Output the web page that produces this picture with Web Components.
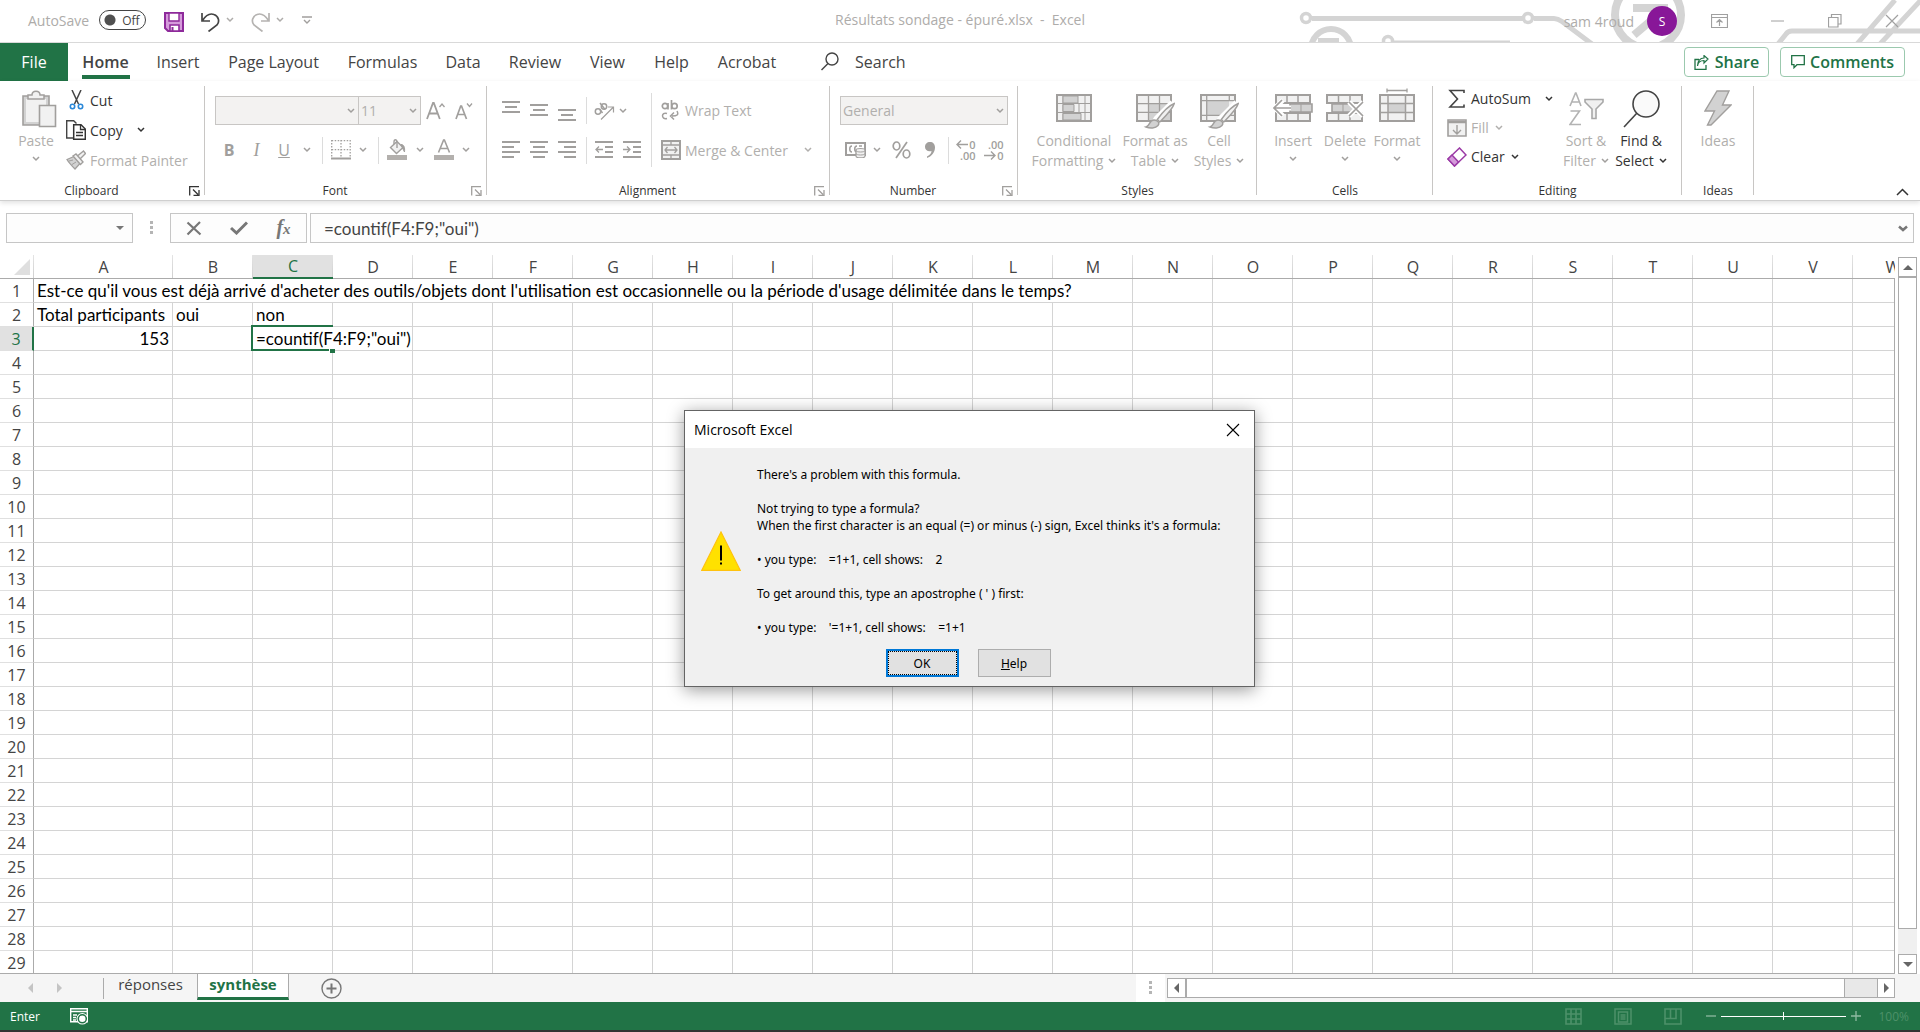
<!DOCTYPE html>
<html lang="en">
<head>
<meta charset="utf-8">
<title>Résultats sondage - épuré.xlsx - Excel</title>
<style>
html,body{margin:0;height:100%;background:#fff;overflow:hidden}
body{font-family:"Open Sans","Noto Sans",sans-serif;color:#444}
</style>
</head>
<body>
<excel-app></excel-app>
<script>
const BASE = `
*{box-sizing:border-box}
button,select,input{font:inherit;color:inherit;background:none;border:0;margin:0;padding:0;border-radius:0;outline:0}
button{display:flex;align-items:center;white-space:nowrap}
svg{display:block}
`;
function define(name, css, html, after) {
  const tpl = document.createElement('template');
  tpl.innerHTML = `<style>${BASE}${css}</style>${html}`;
  customElements.define(name, class extends HTMLElement {
    connectedCallback() {
      if (this.shadowRoot) return;
      this.attachShadow({mode:'open'}).appendChild(tpl.content.cloneNode(true));
      if (after) after(this, this.shadowRoot);
    }
  });
}

/* ---------- icons: [width, height, markup] ---------- */
const G = '#a19f9d', L = '#f1f1f1', M = '#d2d2d2';
const lines = (...rows) => `<path d="${rows.map(r => `M${r[0]} ${r[2]}H${r[1]}`).join('')}" stroke="${G}" stroke-width="2" fill="none"/>`;
const BRUSH = `<path d="M37 9L21 25 16 33" stroke="#fff" stroke-width="7" fill="none"/><path d="M38.300 9.500c-5 2-12 9-17 16l2.500 2.500c6-6 13-13 14.500-18.500z" fill="${L}" stroke="${G}" stroke-width="1.400"/><path d="M10 33c4-1 3-7 8-7 4 0 6 3 4 5.500-2.500 3-8 3-12 1.500z" fill="${M}" stroke="${G}" stroke-width="1.400"/>`;
const ICONS = {
  chev: [8,6,`<path d="M1 1l3 3 3-3" fill="none" stroke="currentColor" stroke-width="1.5"/>`],
  save: [20,20,`<path d="M1 1h18v18H4l-3-3z" fill="#d59bdb" stroke="#8e2a9b" stroke-width="2"/><path d="M5 1h10v8H5z" fill="#fff" stroke="#8e2a9b" stroke-width="1.4"/><path d="M6 19v-6h9v6z" fill="#fff" stroke="#8e2a9b" stroke-width="1.6"/><path d="M8.500 15v4" stroke="#8e2a9b" stroke-width="2"/>`],
  undo: [19,20,`<path d="M1 1v8h8M1.500 8.500C5 3 9 1 13 2.500c4.500 1.500 6 7 3 10.500L7.500 19.500" fill="none" stroke="#444" stroke-width="1.7"/>`],
  redo: [19,20,`<path d="M18 1v8h-8M17.500 8.500C14 3 10 1 6 2.500c-4.500 1.500-6 7-3 10.500l8.500 6.500" fill="none" stroke="#b5b3b1" stroke-width="1.7"/>`],
  custom: [10,8,`<path d="M0 1h10M2 4l3 3 3-3" fill="none" stroke="#a19f9d" stroke-width="1.4"/>`],
  ribbonopt: [17,14,`<path d="M.5 .5h16v13H.5zM.5 3.500h16M8.500 12V6M5.500 8.500l3-3 3 3" fill="none" stroke="#a0a0a0" stroke-width="1.2"/>`],
  min: [13,2,`<path d="M0 1h13" stroke="#a0a0a0"/>`],
  restore: [14,14,`<path d="M.5 3.500h9.500v9.500H.5zM3.500 3.500v-3h9.500v9.500h-3" fill="none" stroke="#a0a0a0" stroke-width="1.2"/>`],
  close: [14,14,`<path d="M1 1l12 12M13 1L1 13" fill="none" stroke="#a0a0a0" stroke-width="1.2"/>`],
  dlgclose: [14,14,`<path d="M1 1l12 12M13 1L1 13" fill="none" stroke="#000" stroke-width="1.1"/>`],
  search: [18,19,`<circle cx="11" cy="7" r="6" fill="none" stroke="#444" stroke-width="1.4"/><path d="M7 11.500L.5 18" stroke="#444" stroke-width="1.4"/>`],
  share: [15,15,`<path d="M5 4.500H1v10h11V10" fill="none" stroke="#217346" stroke-width="1.3"/><path d="M3.500 11c.5-4 3-5.500 6.500-5.500V8l4-4-4-3.500V3C6 3 3.500 6 3.500 11z" fill="none" stroke="#217346" stroke-width="1.2"/>`],
  comment: [14,14,`<path d="M.7.700h12.600v9H6l-3 3v-3H.7z" fill="none" stroke="#217346" stroke-width="1.3"/>`],
  paste: [41,38,`<g transform="translate(6 0)"><path d="M1 6h26v29H1z" fill="${M}" stroke="${G}" stroke-width="1.6"/><path d="M4 9h20v23H4z" fill="${L}"/><path d="M6 9V5h4c0-5 8-5 8 0h4v4z" fill="${L}" stroke="${G}" stroke-width="1.5"/><path d="M17.500 15.500h16v21h-16z" fill="${L}" stroke="${G}" stroke-width="1.600"/></g>`],
  cut: [20,20,`<path d="M6 0l6.500 14M15 0L8.500 14" stroke="#444" stroke-width="1.5" fill="none"/><circle cx="6.500" cy="16.500" r="2.200" fill="#fff" stroke="#2b88d8" stroke-width="1.6"/><circle cx="14.500" cy="16.500" r="2.200" fill="#fff" stroke="#2b88d8" stroke-width="1.6"/>`],
  copy: [20,20,`<path d="M7.500 18H.7V.7h7l2.800 2.800" fill="#fff" stroke="#444" stroke-width="1.4"/><path d="M7.700 4.700h7.300l4.300 4.300v10.300H7.700z" fill="#fff" stroke="#333" stroke-width="1.500"/><path d="M14.500 5v4.500H19M10 12.500h7M10 15.500h7" fill="none" stroke="#333" stroke-width="1.3"/>`],
  painter: [20,20,`<path d="M1 9.500l7-3 6 7-5 5.500c-3-3-6-6-8-9.500z" fill="${M}" stroke="${G}" stroke-width="1.300"/><path d="M7 6l3-2 7 8-2.500 2.500zM12 5.500L17.500 1l2 2.500L14 9" fill="${L}" stroke="${G}" stroke-width="1.400"/><path d="M3 11l4-1M6 14.500l4-2.500" stroke="${G}"/>`],
  growA: [19,20,`<path d="M1 18L7 2h.8l6 16M3.500 12.500h8.500" fill="none" stroke="${G}" stroke-width="1.8"/><path d="M13.500 6l2.500-3 2.500 3" fill="none" stroke="${G}" stroke-width="1.3"/>`],
  shrinkA: [18,20,`<path d="M1 18L5.700 5h.8l5 13M3 13.500h6.500" fill="none" stroke="${G}" stroke-width="1.7"/><path d="M12 2.500l2.500 3 2.500-3" fill="none" stroke="${G}" stroke-width="1.3"/>`],
  borders: [20,20,`<path d="M.7.700h18.500M.7 9.700h18.500M.7 0v18M10 0v18M19.200 0v18" fill="none" stroke="${G}" stroke-width="1.300" stroke-dasharray="1.500 1.500"/><path d="M0 18.500h20" stroke="${G}" stroke-width="2"/>`],
  bucket: [20,22,`<path d="M3.500 8.500l6.500-6 6 6-6.500 6z" fill="${L}" stroke="${G}" stroke-width="1.4"/><path d="M10 9V3c0-3-3-3-3 0v2" fill="none" stroke="${G}" stroke-width="1.400"/><path d="M14 5.500c3 0 4 3 3.500 7.500-1.500-3-2.500-5-3.500-7.500z" fill="${G}" stroke="${G}"/><path d="M0 16h20v5H0z" fill="#b3b0ad"/>`],
  fontcol: [20,22,`<path d="M4.500 13.500L9.600 1h.8l5.100 12.500M6.500 9.500h7" fill="none" stroke="${G}" stroke-width="1.6"/><path d="M0 16h20v5H0z" fill="#b3b0ad"/>`],
  topal: [18,20,lines([0,18,1],[3,15,6],[0,18,11])],
  midal: [18,20,lines([0,18,4],[3,15,9],[0,18,14])],
  botal: [18,20,lines([0,18,9],[3,15,14],[0,18,19])],
  left: [18,20,lines([0,18,2],[0,12,7],[0,18,12],[0,12,17])],
  center: [18,20,lines([0,18,2],[3,15,7],[0,18,12],[3,15,17])],
  right: [18,20,lines([0,18,2],[6,18,7],[0,18,12],[6,18,17])],
  outdent: [18,20,lines([0,18,2],[10,18,7],[10,18,12],[0,18,17])+`<path d="M8 9.500H1M4 6.500l-3 3 3 3" fill="none" stroke="${G}" stroke-width="1.300"/>`],
  indent: [18,20,lines([0,18,2],[10,18,7],[10,18,12],[0,18,17])+`<path d="M0 9.500h7M4 6.500l3 3-3 3" fill="none" stroke="${G}" stroke-width="1.300"/>`],
  orient: [21,20,`<g fill="none" stroke="${G}" stroke-width="1.500"><circle cx="4" cy="10.500" r="2.700"/><path d="M6 8.500l2.500 3.500M6 2l5 6.500"/><circle cx="10" cy="5.500" r="2.700"/><path d="M7 18.500L19.500 6M14 6h5.500v5.500" stroke-width="1.200"/></g>`],
  wrap: [18,20,`<g fill="none" stroke="${G}" stroke-width="1.700"><circle cx="4" cy="6" r="2.700"/><path d="M7 3v6.500M10.500 0v9.500"/><circle cx="13.500" cy="6" r="2.700"/><path d="M6 13.500c-6-2-6 6.500 0 5M16 11c2 4 0 5-5 5M13 12.500L9.500 16l3.500 3.500" stroke-width="1.500"/></g>`],
  merge: [20,20,`<path d="M1 1h18v18H1z" fill="${L}" stroke="${G}" stroke-width="2"/><path d="M1 5h18M1 15h18M10 1v4M10 15v4" stroke="${G}" stroke-width="1.300"/><path d="M4 10h12M6.500 7L4 10l2.500 3M13.500 7l2.500 3-2.500 3" fill="none" stroke="${G}" stroke-width="1.300"/>`],
  money: [21,16,`<path d="M1 1h19v12H1z" fill="none" stroke="${G}" stroke-width="2"/><path d="M7 4C4 4 4 10 7 10M12 4C9 4 9 10 12 10M14 4h3" fill="none" stroke="${G}" stroke-width="1.500"/><path d="M11 8c0-2 9-2 9 0v6c0 2.500-9 2.500-9 0z" fill="${L}" stroke="${G}" stroke-width="1.200"/><path d="M11 8.500c0 2 9 2 9 0M11 11.500c0 2 9 2 9 0" fill="none" stroke="${G}"/>`],
  percent: [19,18,`<g fill="none" stroke="${G}" stroke-width="1.700"><ellipse cx="4.500" cy="5" rx="3.300" ry="4"/><ellipse cx="14.500" cy="13" rx="3.300" ry="4"/><path d="M15 1L4 17"/></g>`],
  comma: [10,16,`<path d="M5 0c3 0 5 2 5 5.500 0 5-3.500 9-8 10.500v-1.500c3-1.500 4.500-3.500 4.500-5.500C3 10 0 8 0 5c0-3 2-5 5-5z" fill="${G}"/>`],
  arrl: [12,9,`<path d="M12 4.500H1M5 .5l-4 4 4 4" fill="none" stroke="${G}" stroke-width="1.400"/>`],
  arrr: [12,9,`<path d="M0 4.500h11M7 .5l4 4-4 4" fill="none" stroke="${G}" stroke-width="1.400"/>`],
  cf: [36,28,`<path d="M1 1h34v26H1z" fill="${L}" stroke="${G}" stroke-width="2"/><path d="M7 1v26M23 10v8M29 1v26M1 9.500h34M1 18.500h34" stroke="${G}"/><path d="M7 2h15v7H7zM7 10.500h11v7H7zM7 19.500h18v6.500H7z" fill="${M}" stroke="${G}"/>`],
  table: [39,35,`<path d="M1 1h34v26H1z" fill="${L}" stroke="${G}" stroke-width="2"/><path d="M13 10h21v16H13z" fill="${M}"/><path d="M1 9.700h34M1 18.300h34M12.500 1v26M23.500 1v26" stroke="${G}" stroke-width="1.300"/>${BRUSH}`],
  cell: [39,35,`<path d="M1 1h34v26H1z" fill="${L}" stroke="${G}" stroke-width="2"/><path d="M7 7h22v14H7z" fill="${M}"/><path d="M1 6.700h34M1 21.300h34M6.700 1v26M29.300 1v6" stroke="${G}" stroke-width="1.300"/>${BRUSH}`],
  insert: [40,28,`<path d="M3 1h34v8H3zM3 19h34v8H3z" fill="${L}" stroke="${G}" stroke-width="2"/><path d="M14 1v8M25 1v8M14 19v8M25 19v8" stroke="${G}" stroke-width="1.500"/><path d="M17 10h22v8H17z" fill="${M}" stroke="${G}" stroke-width="1.600"/><path d="M28 10v8" stroke="${G}"/><path d="M18 14H2M10 6l-8 8 8 8" fill="none" stroke="#fff" stroke-width="5"/><path d="M18 14H1M9 6l-8 8 8 8" fill="none" stroke="${G}" stroke-width="1.700"/>`],
  delete: [38,28,`<path d="M1 1h35v8H1zM1 19h35v8H1z" fill="${L}" stroke="${G}" stroke-width="2"/><path d="M12.500 1v8M24 1v8M12.500 19v8M24 19v8" stroke="${G}" stroke-width="1.500"/><path d="M6 10h22v8H6z" fill="${M}" stroke="${G}" stroke-width="1.600"/><path d="M17 10v8" stroke="${G}"/><path d="M23 8l14 14M37 8L23 22" stroke="#fff" stroke-width="5"/><path d="M23 8l14 14M37 8L23 22" stroke="${G}" stroke-width="1.700"/>`],
  format: [36,34,`<path d="M8 .5v4M28 .5v4M8 2.500h20" stroke="${G}" stroke-width="1.300"/><path d="M1 7h34v26H1z" fill="${L}" stroke="${G}" stroke-width="2"/><path d="M9 15.500h17v8.500H9z" fill="${M}"/><path d="M1 15.500h34M1 24.500h34M9 7v26M26.500 7v26" stroke="${G}" stroke-width="1.500"/>`],
  sum: [20,20,`<path d="M17 4V1.500H3l7.500 8.500L3 18h14v-2.500" fill="none" stroke="#444" stroke-width="1.600"/>`],
  fill: [20,18,`<path d="M1 1h18v16H1z" fill="${L}" stroke="${G}" stroke-width="1.600"/><path d="M1 3h18" stroke="${G}" stroke-width="2.500"/><path d="M10 6v9M6 11l4 4 4-4" fill="none" stroke="${G}" stroke-width="1.400"/>`],
  clear: [20,20,`<path d="M1 12L12.500 1 19 8 7.500 19z" fill="#fff" stroke="#9b3aa6" stroke-width="1.500"/><path d="M1 12l4-4 6.500 7-4 4z" fill="#d59bdb" stroke="#9b3aa6" stroke-width="1.500"/>`],
  sort: [35,36,`<path d="M1 16L6.500 3h.5L12 16M3 12h8M1.500 21h9L1 34.500h11" fill="none" stroke="#b3b3b3" stroke-width="1.600"/><path d="M16 9.500h18v2.500l-7 7v9.500h-4V19l-7-7z" fill="${L}" stroke="#a8a8a8" stroke-width="1.600"/>`],
  find: [37,38,`<circle cx="23" cy="14" r="13" fill="#fafafa" stroke="#444" stroke-width="1.600"/><path d="M14 23L1 37" stroke="#444" stroke-width="1.600"/>`],
  ideas: [28,36,`<path d="M13 1h12l-6.500 14H27L7 35H3.500l7-14H1z" fill="${M}" stroke="${G}" stroke-width="1.400"/>`],
  launch: [11,10,`<path d="M.7 9.500V.700H10M4 3.500l5 5M10 4v5.300H4.500" fill="none" stroke="currentColor" stroke-width="1.300"/>`],
  collapse: [13,8,`<path d="M1 7l5.500-5.500L12 7" fill="none" stroke="#333" stroke-width="1.500"/>`],
  down: [8,4,`<path d="M0 0h8L4 4z" fill="#777"/>`],
  up2: [10,5,`<path d="M0 5h10L5 0z" fill="#666"/>`],
  down2: [10,5,`<path d="M0 0h10L5 5z" fill="#666"/>`],
  left2: [5,10,`<path d="M5 0v10L0 5z" fill="currentColor"/>`],
  right2: [5,10,`<path d="M0 0v10l5-5z" fill="currentColor"/>`],
  x: [16,15,`<path d="M1.500 1.500l13 12M14 1L1.500 13.500" stroke="#777" stroke-width="2.200" fill="none"/>`],
  check: [18,14,`<path d="M1 7l5.500 5L17 1.500" stroke="#777" stroke-width="3" fill="none"/>`],
  expand: [10,7,`<path d="M1 1.500l4 3.500 4-3.500" stroke="#777" stroke-width="2.500" fill="none"/>`],
  dots: [3,14,`<path d="M0 0h3v3H0zM0 5h3v3H0zM0 10h3v3H0z" fill="#b5b5b5"/>`],
  corner: [16,16,`<path d="M16 0v16H0z" fill="#dfdfdf"/>`],
  plus: [21,21,`<circle cx="10.500" cy="10.500" r="9.500" fill="none" stroke="#777" stroke-width="1.400"/><path d="M10.500 5.500v10M5.500 10.500h10" stroke="#777" stroke-width="2"/>`],
  warn: [40,40,`<path d="M20 1L39.200 39.300H.8z" fill="#ffe100" stroke="#ffc20e" stroke-width="1.200"/><path d="M20 14.500v15M20 31.500v2" stroke="#000" stroke-width="2"/>`],
  macro: [18,17,`<path d="M.7.700h16.600v13H.7zM.7 3.500h16.600M3 7h4M3 9.500h3M3 12h3" fill="none" stroke="#fff" stroke-width="1.400"/><circle cx="12.300" cy="10.800" r="5.800" fill="#fff"/><circle cx="12.300" cy="10.800" r="4" fill="#fff" stroke="#217346" stroke-width="1.500"/>`],
  vnormal: [17,17,`<path d="M1 1h15v15H1zM6 1v15M11 1v15M1 6h15M1 11h15" fill="none" stroke="#4d9169" stroke-width="1.600"/>`],
  vpage: [18,17,`<path d="M1 1h16v15H1zM4.500 4h9v10h-9zM6.500 7h5M6.500 9h5M6.500 11h5" fill="none" stroke="#4d9169" stroke-width="1.500"/>`],
  vbreak: [18,17,`<path d="M1 1h16v15H1zM1 10.500h5.500V1M6.500 10.500H12V1" fill="none" stroke="#4d9169" stroke-width="1.600"/>`],
  zminus: [10,10,`<path d="M0 5h10" stroke="#8fbaa1" stroke-width="1.300"/>`],
  zplus: [10,10,`<path d="M0 5h10M5 0v10" stroke="#8fbaa1" stroke-width="1.300"/>`]
};
define('x-icon', `:host{display:inline-flex;flex:none}`, ``, (el, root) => {
  const [w,h,m] = ICONS[el.getAttribute('name')];
  root.innerHTML += `<svg width="${w}" height="${h}" viewBox="0 0 ${w} ${h}" aria-hidden="true">${m}</svg>`;
});

/* ---------- title bar ---------- */
define('title-bar', `
:host{display:grid;grid-template-columns:1fr auto 1fr;align-items:start;height:43px;border-bottom:1px solid #d9d9d9;position:relative;font-size:14px;color:#aeacaa;overflow:hidden}
.art{position:absolute;right:0;top:0}
.l,.r{display:flex;align-items:center;height:42px}
.l,.t{height:40px}
.l{padding-left:28px}
label{display:flex;align-items:center;gap:10px}
input{appearance:none;width:47px;height:20px;border:1px solid #444;border-radius:10px;background:radial-gradient(circle at 10px 9px,#505050 5px,#fff 6px)}
.tg{display:grid;align-items:center}.tg>*{grid-area:1/1}.tg span{font-size:12px;color:#444;padding-left:23px;pointer-events:none}
.l button{height:24px}
.save{margin:4px 0 0 18px}.undo{margin:4px 0 0 17px}.c{width:20px;justify-content:center}.redo{margin:4px 0 0 11px}.cu{margin-left:12px}
.r{justify-content:flex-end;position:relative}
.av{width:30px;height:30px;border-radius:50%;background:#881798;color:#fff;font-size:12px;justify-content:center;margin:0 26px 0 13px}
.w{width:57px;height:30px;justify-content:center}
.o{width:32px;margin-right:14px}
.t{white-space:pre;line-height:40px}
`, `
<svg class="art" width="640" height="42" viewBox="1280 0 640 42" fill="none" stroke="#d4d4d4" stroke-width="5" aria-hidden="true">
<circle cx="1306" cy="18" r="4.500" stroke-width="3.500"/><path d="M1312 18.500h212M1534 18.500h20q4 0 8 3l32 24"/><circle cx="1528" cy="18" r="4.500" stroke-width="3.500"/>
<circle cx="1331" cy="49" r="20" stroke-width="6"/><path d="M1318 40.500h21" stroke-width="5"/><circle cx="1388" cy="41" r="4.500" stroke-width="3.500"/><path d="M1394 42h116" stroke-width="3"/>
<circle cx="1648" cy="15" r="33" stroke-width="8"/><path d="M1633 8h35M1634 35l32-27" stroke-width="8"/>
<path d="M1778 44l8-10q2-3 6-3h130M1857 44l38-44M1880 44l42-45" stroke-width="5"/></svg>
<div class="l"><label>AutoSave<span class="tg"><input type="checkbox" role="switch"><span>Off</span></span></label>
<button class="save" aria-label="Save"><x-icon name="save"></x-icon></button>
<button class="undo" aria-label="Undo"><x-icon name="undo"></x-icon></button><button class="c" aria-label="Undo list"><x-icon name="chev"></x-icon></button>
<button class="redo" aria-label="Redo"><x-icon name="redo"></x-icon></button><button class="c" aria-label="Redo list"><x-icon name="chev"></x-icon></button>
<button class="cu" aria-label="Customize toolbar"><x-icon name="custom"></x-icon></button></div>
<div class="t">Résultats sondage - épuré.xlsx  -  Excel</div>
<div class="r"><span>sam 4roud</span><button class="av">S</button>
<button class="w o" aria-label="Ribbon display options"><x-icon name="ribbonopt"></x-icon></button><button class="w" aria-label="Minimize"><x-icon name="min"></x-icon></button><button class="w" aria-label="Restore"><x-icon name="restore"></x-icon></button><button class="w" aria-label="Close"><x-icon name="close"></x-icon></button></div>`);

/* ---------- ribbon tabs ---------- */
define('ribbon-tab', `
:host{display:block;flex:none;width:var(--w)}
button{width:100%;height:38px;justify-content:center;font-size:16px;padding-bottom:1px}
:host([file]) button{background:#217346;color:#fff}
:host([on]) button{font-weight:600;background:linear-gradient(#217346,#217346) 50% 32px/48px 4px no-repeat}
`, `<button role="tab"><slot></slot></button>`);
define('ribbon-tabs', `
:host{display:flex;height:38px}
.s{display:flex;align-items:center;gap:16px;padding:0 0 1px 30px;font-size:16px;height:38px}
.r{margin-left:auto;display:flex;gap:11px;padding:4px 15px 0 0}
.r button{height:30px;border:1px solid #9bc9ae;border-radius:4px;color:#217346;font-weight:600;font-size:16px;justify-content:center;gap:6px;width:85px}
.r button.c{width:125px;gap:5px}
input{width:80px}input::placeholder{color:#444;opacity:1}
`, `
<ribbon-tab file style="--w:68px">File</ribbon-tab><ribbon-tab on style="--w:75px">Home</ribbon-tab><ribbon-tab style="--w:70px">Insert</ribbon-tab><ribbon-tab style="--w:121px">Page Layout</ribbon-tab><ribbon-tab style="--w:97px">Formulas</ribbon-tab><ribbon-tab style="--w:64px">Data</ribbon-tab><ribbon-tab style="--w:80px">Review</ribbon-tab><ribbon-tab style="--w:65px">View</ribbon-tab><ribbon-tab style="--w:63px">Help</ribbon-tab><ribbon-tab style="--w:88px">Acrobat</ribbon-tab>
<label class="s"><x-icon name="search"></x-icon><input placeholder="Search" aria-label="Search"></label>
<div class="r"><button><x-icon name="share"></x-icon>Share</button><button class="c"><x-icon name="comment"></x-icon>Comments</button></div>`);

/* ---------- ribbon parts ---------- */
define('ribbon-group', `
:host{display:flex;flex-direction:column;flex:none;width:var(--w);height:119px;background:linear-gradient(#c8c6c4,#c8c6c4) right 5px/1px 109px no-repeat}
.b{flex:1;display:flex;align-items:flex-start}
.f{display:flex;height:19px;align-items:center;font-size:12px;text-align:center;color:#333}
.f span{flex:1}
.f button{justify-content:center;width:22px;height:16px;color:#a19f9d}
:host([live]) .f button{color:#333}
`, `<div class="b"><slot></slot></div><div class="f"><span></span></div>`, (el, r) => {
  r.querySelector('span').textContent = el.getAttribute('label');
  if (el.hasAttribute('launch')) r.querySelector('.f').insertAdjacentHTML('beforeend','<button aria-label="More settings"><x-icon name="launch"></x-icon></button>');
});
define('big-button', `
:host{display:block;flex:none;width:var(--w);font-size:14px;color:#b1afad}
:host([live]){color:#333}
button{flex-direction:column;width:100%;padding-top:7px}
.i{height:43px;display:flex;align-items:flex-start;flex:none;padding-top:2px}
:host([grid]) .i{padding-top:6px}
:host([icon=format]) .i{padding-top:0}
span{line-height:20px;display:flex;align-items:center;gap:5px}
.z{height:16px}
x-icon[name=chev]{color:#a19f9d}:host([live]) x-icon[name=chev]{color:#333}
`, ``, (el, r) => {
  const a = n => el.getAttribute(n);
  r.innerHTML += `<button><div class="i"><x-icon name="${a('icon')}"></x-icon></div><span>${a('l1')}</span>${
    el.hasAttribute('l2') ? `<span>${a('l2')} <x-icon name="chev"></x-icon></span>` : el.hasAttribute('menu') ? `<span class="z"><x-icon name="chev"></x-icon></span>` : ''}</button>`;
});
define('row-button', `
:host{display:flex;flex:none;height:var(--h,30px);align-items:center;font-size:14px;color:#b1afad}
:host([live]){color:#333}
button{height:100%}.i{width:24px;justify-content:flex-start;display:flex;align-items:center}
.c{padding-left:var(--g,6px)}
`, ``, (el, r) => {
  r.innerHTML += `<button><div class="i"><x-icon name="${el.getAttribute('icon')}"></x-icon></div>${el.getAttribute('label')}</button>${
    el.hasAttribute('menu') ? `<button class="c" aria-label="Options"><x-icon name="chev"></x-icon></button>` : ''}`;
});
/* tool-row: a strip of small icon buttons; each item is name:width */
define('tool-row', `
:host{display:flex;align-items:center;height:28px;color:#a19f9d}
button{justify-content:center;height:28px;flex:none}
i{flex:none;height:27px;width:1px;background:#dcdcdc}
b,em,u{font-size:16px}
em{font-family:"Liberation Serif",serif;font-size:18px}
.d{display:flex;flex-direction:column;align-items:flex-end;font-size:11px;line-height:11px;font-weight:600}
.d span{display:flex;align-items:center;gap:1px}
`, ``, (el, r) => {
  const T = {bold:'<b>B</b>', italic:'<em>I</em>', under:'<u>U</u>',
    inc:'<div class="d"><span><x-icon name="arrl"></x-icon>0</span><span>.00</span></div>',
    dec:'<div class="d"><span>.00</span><span><x-icon name="arrr"></x-icon>0</span></div>'};
  r.innerHTML += el.getAttribute('items').split(' ').map(s => {
    const [n,w] = s.split(':');
    if (n === 'sep') return `<span style="width:${w}px;display:flex;justify-content:center"><i></i></span>`;
    return `<button aria-label="${n}" style="width:${w}px">${T[n] || `<x-icon name="${n}"></x-icon>`}</button>`;
  }).join('');
});
define('drop-box', `
:host{display:grid;align-items:center;width:var(--w);height:29px;border:1px solid #c8c6c4;background:#f3f2f1;font-size:14px;color:#b1afad}
select,x-icon{grid-area:1/1}
select{appearance:none;width:100%;height:27px;padding-left:2px}
x-icon{justify-self:end;margin-right:3px;pointer-events:none;color:#a19f9d}
`, ``, (el, r) => {
  r.innerHTML += `<select aria-label="${el.getAttribute('label')}"><option>${el.getAttribute('value')||''}</option></select><x-icon name="chev"></x-icon>`;
});

define('excel-ribbon', `
:host{display:flex;height:120px;border-bottom:1px solid #cfcfcf;position:relative;z-index:1;box-shadow:0 2px 5px rgba(0,0,0,.12);background:#fff}
.col{display:flex;flex-direction:column}.row{display:flex;align-items:center}
.v{width:1px;height:74px;background:#dcdcdc;margin-top:12px;flex:none}
.end{margin-left:auto;align-self:flex-end;padding:0 11px 4px 0}
`, `
<ribbon-group label="Clipboard" launch live style="--w:205px"><big-button icon="paste" l1="Paste" menu style="--w:66px;padding-left:6px"></big-button>
 <div class="col" style="padding-top:4px"><row-button live icon="cut" label="Cut"></row-button><row-button live icon="copy" label="Copy" menu style="--g:14px"></row-button><row-button icon="painter" label="Format Painter"></row-button></div></ribbon-group>
<ribbon-group label="Font" launch style="--w:282px"><div class="col" style="padding:15px 0 0 10px;gap:11px">
 <div class="row"><drop-box label="Font" style="--w:144px"></drop-box><drop-box label="Font size" value="11" style="--w:63px;margin-left:-1px"></drop-box><tool-row items="growA:29 shrinkA:28"></tool-row></div>
 <tool-row items="bold:28 italic:27 under:28 chev:18 sep:12 borders:25 chev:20 sep:10 bucket:28 chev:17 fontcol:32 chev:12"></tool-row></div></ribbon-group>
<ribbon-group label="Alignment" launch style="--w:343px"><div class="col" style="padding:15px 0 0 10px;gap:11px">
 <tool-row items="topal:28 midal:28 botal:28 sep:10 orient:26 chev:12" style="height:29px"></tool-row>
 <tool-row items="left:28 center:28 right:28 sep:10 outdent:26 indent:30"></tool-row></div>
 <div class="v" style="margin-left:4px"></div>
 <div class="col" style="padding:14px 0 0 9px;gap:10px"><row-button icon="wrap" label="Wrap Text"></row-button><row-button icon="merge" label="Merge &amp; Center" menu style="--g:16px"></row-button></div></ribbon-group>
<ribbon-group label="Number" launch style="--w:188px"><div class="col" style="padding:15px 0 0 10px;gap:11px"><drop-box label="Number format" value="General" style="--w:168px"></drop-box>
 <tool-row items="money:30 chev:14 percent:34 comma:24 sep:12 inc:24 dec:32"></tool-row></div></ribbon-group>
<ribbon-group label="Styles" style="--w:239px"><big-button grid icon="cf" l1="Conditional" l2="Formatting" style="--w:94px;margin-left:9px"></big-button><big-button grid icon="table" l1="Format as" l2="Table" style="--w:68px"></big-button><big-button grid icon="cell" l1="Cell" l2="Styles" style="--w:60px"></big-button></ribbon-group>
<ribbon-group label="Cells" style="--w:176px"><big-button grid icon="insert" l1="Insert" menu style="--w:52px;margin-left:10px"></big-button><big-button grid icon="delete" l1="Delete" menu style="--w:52px"></big-button><big-button icon="format" l1="Format" menu style="--w:52px"></big-button></ribbon-group>
<ribbon-group label="Editing" style="--w:249px"><div class="col" style="padding:3px 0 0 14px;width:126px"><row-button live icon="sum" label="AutoSum" menu style="--h:29px;--g:14px"></row-button><row-button icon="fill" label="Fill" menu style="--h:29px"></row-button><row-button live icon="clear" label="Clear" menu style="--h:29px"></row-button></div>
 <big-button icon="sort" l1="Sort &amp;amp;" l2="Filter" style="--w:54px"></big-button><big-button live icon="find" l1="Find &amp;amp;" l2="Select" style="--w:56px"></big-button></ribbon-group>
<ribbon-group label="Ideas" style="--w:72px"><big-button icon="ideas" l1="Ideas" style="--w:72px"></big-button></ribbon-group>
<button class="end" aria-label="Collapse ribbon"><x-icon name="collapse"></x-icon></button>`);

/* ---------- formula bar ---------- */
define('formula-bar', `
:host{display:flex;height:54px;padding:12px 6px 12px 6px;background:#fff}
.bx{display:flex;align-items:center;border:1px solid #c6c6c6;background:#fdfdfd;height:30px}
.n{width:127px}.n input{flex:1;min-width:0;height:28px;padding:0 6px}.n button,.e{width:24px;height:28px;justify-content:center;flex:none}
.d{width:37px;display:flex;align-items:center;justify-content:center;height:30px}
.k{width:137px;margin-right:3px}.k button{flex:1;justify-content:center;height:28px;color:#777}
.fx{font:italic 600 20px/24px "Liberation Serif",serif}.fx small{font-size:15px}
.f{flex:1}.f input{flex:1;min-width:0;height:28px;padding-left:13px;font:17px Lato,"Open Sans",sans-serif;color:#444}
.e{width:20px}
`, `
<div class="bx n"><input aria-label="Name box"><button aria-label="Names"><x-icon name="down"></x-icon></button></div>
<div class="d"><x-icon name="dots"></x-icon></div>
<div class="bx k"><button aria-label="Cancel"><x-icon name="x"></x-icon></button><button aria-label="Enter"><x-icon name="check"></x-icon></button><button aria-label="Insert function"><span class="fx">f<small>x</small></span></button></div>
<div class="bx f"><input aria-label="Formula" value='=countif(F4:F9;"oui")'><button class="e" aria-label="Expand"><x-icon name="expand"></x-icon></button></div>`);

/* ---------- sheet ---------- */
define('sheet-grid', `
:host{display:flex;flex:1;min-height:0;background:#fff}
.g{flex:1;min-width:0;overflow:hidden;position:relative}
.g::after{content:"";position:absolute;inset:23px 0 0 0;border-right:1px solid #ababab;border-bottom:1px solid #ababab;pointer-events:none}
table{table-layout:fixed;border-collapse:separate;border-spacing:0;width:1933px}
th{font-weight:400;font-size:16px;color:#444;padding:0;height:24px;line-height:20px}
thead th{border-bottom:1px solid #ababab;background:linear-gradient(#e4e4e4,#d0d0d0) right/1px 100% no-repeat}
thead th.on{background-color:#e1e1e1;border-bottom:2px solid #217346;color:#217346}
thead th:first-child x-icon{display:flex;justify-content:flex-end;padding-right:4px}
tbody th{border-right:1px solid #ababab;border-bottom:1px solid #e0e0e0}
tbody th.on{background:#e1e1e1;color:#217346;border-right:2px solid #217346}
td{height:24px;padding:0 3px;border-right:1px solid #d4d4d4;border-bottom:1px solid #d4d4d4;font:17px/20px Lato,"Open Sans",sans-serif;color:#000;white-space:nowrap}
td.act{position:relative}
td.act::before{content:"";box-sizing:border-box;position:absolute;left:-2px;top:-2px;width:82px;height:26px;border:2px solid #217346;border-right:0}
td.act::after{content:"";box-sizing:border-box;position:absolute;left:76px;bottom:-3px;width:6px;height:5px;background:#217346;border:solid #fff;border-width:1px 0 0 1px}
.v{width:25px;flex:none;padding:2px 3px 0 3px;display:flex;flex-direction:column}
.v button{height:20px;width:19px;border:1px solid #ababab;justify-content:center;flex:none;background:#fff}
.tr{flex:1;background:#f0f0f0;width:19px}
.th{height:calc(100% - 25px);border:1px solid #ababab;background:#fff}
`, `<div class="g"><table><colgroup></colgroup><thead><tr></tr></thead><tbody></tbody></table></div>
<div class="v"><button aria-label="Scroll up"><x-icon name="up2"></x-icon></button><div class="tr"><div class="th"></div></div><button aria-label="Scroll down"><x-icon name="down2"></x-icon></button></div>`, (el, r) => {
  const cols = 'ABCDEFGHIJKLMNOPQRSTUVW'.split('');
  r.querySelector('colgroup').innerHTML = '<col style="width:34px"><col style="width:139px">' + cols.slice(1).map(() => '<col style="width:80px">').join('');
  r.querySelector('thead tr').innerHTML = '<th><x-icon name="corner"></x-icon></th>' + cols.map(c => `<th${c==='C'?' class="on"':''}>${c}</th>`).join('');
  const data = {
    A1: ['colspan="13"', "Est-ce qu'il vous est déjà arrivé d'acheter des outils/objets dont l'utilisation est occasionnelle ou la période d'usage délimitée dans le temps?", 13],
    A2: ['', 'Total participants', 1], B2: ['', 'oui', 1], C2: ['', 'non', 1],
    A3: ['align="right"', '153', 1], C3: ['class="act" colspan="2"', '=countif(F4:F9;"oui")', 2]
  };
  let html = '';
  for (let n = 1; n <= 29; n++) {
    html += `<tr><th${n===3?' class="on"':''}>${n}</th>`;
    for (let i = 0; i < cols.length;) {
      const d = data[cols[i] + n] || ['', '', 1];
      html += `<td ${d[0]}>${d[1]}</td>`; i += d[2];
    }
    html += '</tr>';
  }
  r.querySelector('tbody').innerHTML = html;
});

/* ---------- sheet tabs and horizontal scroll ---------- */
define('sheet-tabs', `
:host{display:flex;height:28px;background:#f5f5f5;font-size:15px;color:#444}
.a{display:flex;align-items:center;width:103px;padding-left:28px;gap:24px;color:#c4c4c4}
.s{width:1px;height:21px;background:#ababab;margin:4px 0 0;flex:none}
.t{height:26px;justify-content:center;width:93px;padding-bottom:6px}
.t.on{background:#fff;border:1px solid #ababab;border-top:0;border-bottom:3px solid #217346;color:#217346;font-weight:700;width:92px;margin-top:-1px;height:27px;padding-bottom:3px}
.p{margin-left:32px}
.sp{margin-left:auto;width:29px;background:#fff;display:flex;align-items:center;justify-content:center}
.h{flex:0 0 728px;margin:4px 25px 0 2px;height:20px;display:flex;border:1px solid #ababab;background:#e8e8e8;color:#666}
.h button{width:17px;background:#fff;justify-content:center;flex:none}
.th{flex:1;background:#fff;border:solid #ababab;border-width:0 1px 0 2px;margin-right:32px}
.h button:last-child{border-left:1px solid #ababab}
`, `
<div class="a"><button aria-label="Previous sheet"><x-icon name="left2"></x-icon></button><button aria-label="Next sheet"><x-icon name="right2"></x-icon></button></div><div class="s"></div>
<button class="t">réponses</button><button class="t on">synthèse</button><button class="p" aria-label="New sheet"><x-icon name="plus"></x-icon></button>
<div class="sp"><x-icon name="dots"></x-icon></div>
<div class="h"><button aria-label="Scroll left"><x-icon name="left2"></x-icon></button><div class="th"></div><button aria-label="Scroll right"><x-icon name="right2"></x-icon></button></div>`);

/* ---------- status bar ---------- */
define('status-bar', `
:host{display:flex;align-items:center;height:30px;background:#217346;border-bottom:2px solid #333;color:#fff;font-size:12px;padding:0 11px 0 10px;box-sizing:border-box}
.m{margin-left:30px}.v{margin-left:auto;display:flex;gap:32px}
.z{display:flex;align-items:center;gap:5px;margin-left:24px}
input{appearance:none;width:125px;height:10px;background:linear-gradient(#fff,#fff) center/100% 1px no-repeat}
input::-webkit-slider-thumb{appearance:none;width:1px;height:8px;background:#fff}
.p{color:#4d9169;width:48px;justify-content:flex-end}
`, `<span>Enter</span><button class="m" aria-label="Record macro"><x-icon name="macro"></x-icon></button>
<div class="v"><button aria-label="Normal"><x-icon name="vnormal"></x-icon></button><button aria-label="Page layout"><x-icon name="vpage"></x-icon></button><button aria-label="Page break preview"><x-icon name="vbreak"></x-icon></button></div>
<div class="z"><button aria-label="Zoom out"><x-icon name="zminus"></x-icon></button><input type="range" aria-label="Zoom" value="50"><button aria-label="Zoom in"><x-icon name="zplus"></x-icon></button></div><button class="p">100%</button>`);

/* ---------- alert ---------- */
define('alert-dialog', `
:host{position:absolute;z-index:5;left:684px;top:410px;width:571px;border:1px solid #646464;background:#f0f0f0;color:#000;box-shadow:0 3px 16px rgba(0,0,0,.4);font:12px "Noto Sans","Open Sans",sans-serif}
header{display:flex;justify-content:space-between;align-items:center;height:37px;background:#fff;padding:0 14px 0 9px;font-size:14px;font-family:"Open Sans",sans-serif}
.m{display:flex;align-items:center;padding:18px 0 0 16px;gap:16px}
p{margin:0;line-height:17px;white-space:pre}
footer{display:flex;gap:19px;justify-content:center;padding:13px 3px 9px 0}
footer button{width:73px;height:28px;background:#e1e1e1;border:1px solid #adadad;justify-content:center}
footer .ok{border:2px solid #0078d7;outline:1px dotted #000;outline-offset:-3px}
`, `<header><span>Microsoft Excel</span><button aria-label="Close"><x-icon name="dlgclose"></x-icon></button></header>
<div class="m"><x-icon name="warn"></x-icon><p>There's a problem with this formula.

Not trying to type a formula?
When the first character is an equal (=) or minus (-) sign, Excel thinks it's a formula:

• you type:    =1+1, cell shows:    2

To get around this, type an apostrophe ( ' ) first:

• you type:    '=1+1, cell shows:    =1+1</p></div>
<footer><button class="ok">OK</button><button><span><u>H</u>elp</span></button></footer>`,
(el) => el.setAttribute('role', 'alertdialog'));

define('excel-app', `:host{display:flex;flex-direction:column;height:100vh;position:relative}`, `
<title-bar></title-bar><ribbon-tabs></ribbon-tabs><excel-ribbon></excel-ribbon><formula-bar></formula-bar><sheet-grid></sheet-grid><sheet-tabs></sheet-tabs><status-bar></status-bar><alert-dialog></alert-dialog>`);
</script>
</body>
</html>
